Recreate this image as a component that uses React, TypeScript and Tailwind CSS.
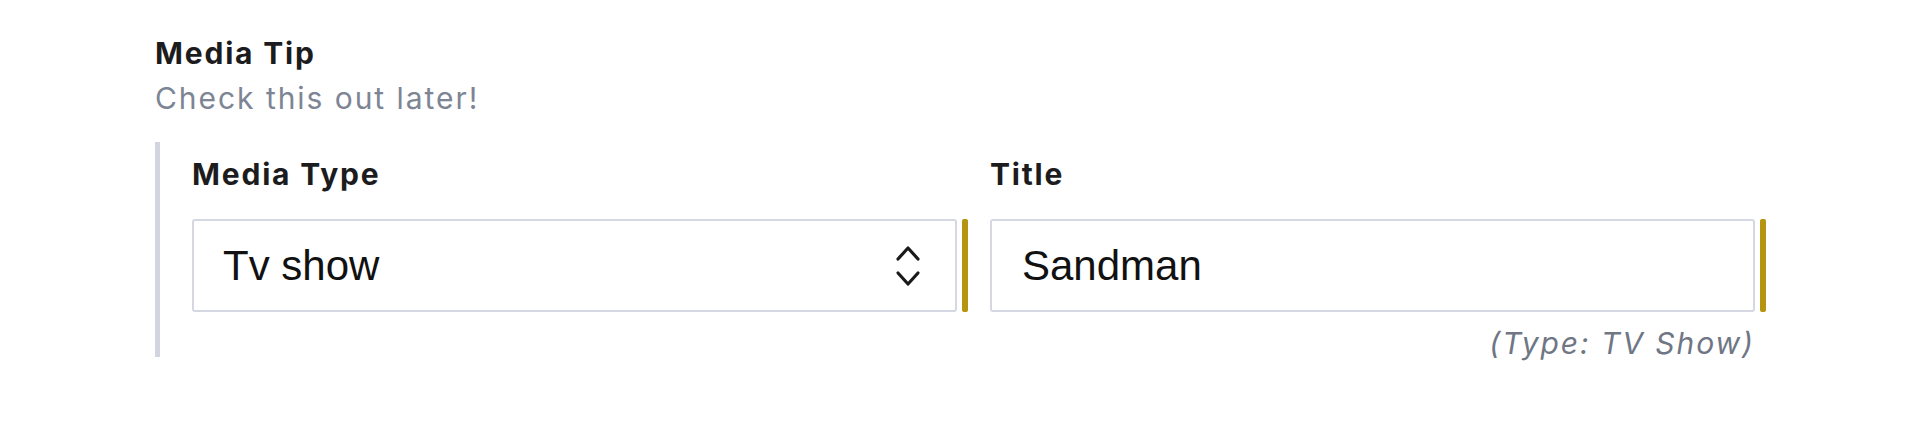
import { useState } from "react";

function Chevrons() {
  return (
    <svg width="26" height="44" viewBox="0 0 26 44" fill="none" className="shrink-0">
      <path d="M3 15 L13 4 L23 15" stroke="#1a1a1a" strokeWidth="3.2" strokeLinecap="round" strokeLinejoin="round" />
      <path d="M3 29 L13 40 L23 29" stroke="#1a1a1a" strokeWidth="3.2" strokeLinecap="round" strokeLinejoin="round" />
    </svg>
  );
}

interface FieldProps {
  label: string;
  children: React.ReactNode;
}

function Field({ label, children }: FieldProps) {
  return (
    <div className="flex flex-col">
      <label className="font-['Inter'] font-bold text-[30px] leading-[36px] tracking-[0.06em] text-[#1c1c1e]">
        {label}
      </label>
      <div className="mt-[27px] flex items-stretch gap-[5px]">
        {children}
        <div className="w-[6px] shrink-0 rounded-[2px] bg-[#b5950f]" />
      </div>
    </div>
  );
}

export default function App() {
  const [mediaType, setMediaType] = useState("tv");
  const [title, setTitle] = useState("Sandman");

  return (
    <div className="h-[426px] w-[1920px] bg-white pl-[155px] pt-[35px]">
      <div className="w-[1611px]">
        <h2 className="font-['Inter'] font-bold text-[30px] leading-[36px] tracking-[0.06em] text-[#1c1c1e]">
          Media Tip
        </h2>
        <p className="mt-[9px] font-['Inter'] text-[30px] leading-[36px] tracking-[0.065em] text-[#7d8594]">
          Check this out later!
        </p>

        <div className="mt-[26px] border-l-[5px] border-[#d2d5de] pl-[32px] pt-[14px]">
          <div className="grid grid-cols-2 gap-x-[22px]">
            <Field label="Media Type">
              <div className="relative flex h-[93px] flex-1 items-center rounded-[3px] border-2 border-[#d5d8e2] bg-white pl-[29px] pr-[34px]">
                <select
                  value={mediaType}
                  onChange={(e) => setMediaType(e.target.value)}
                  className="h-full flex-1 appearance-none bg-transparent font-['Liberation_Sans',Arial,sans-serif] text-[42px] text-[#111] outline-none"
                >
                  <option value="tv">Tv show</option>
                  <option value="movie">Movie</option>
                  <option value="book">Book</option>
                </select>
                <Chevrons />
              </div>
            </Field>
            <Field label="Title">
              <div className="flex h-[93px] flex-1 items-center rounded-[3px] border-2 border-[#d5d8e2] bg-white pl-[30px] pr-[20px]">
                <input
                  value={title}
                  onChange={(e) => setTitle(e.target.value)}
                  className="h-full w-full bg-transparent font-['Liberation_Sans',Arial,sans-serif] text-[42px] text-[#111] outline-none"
                />
              </div>
            </Field>
          </div>
          <div className="mt-[17px] flex justify-end pr-[11px]">
            <span className="font-['Inter'] italic text-[30px] leading-[28px] tracking-[0.065em] text-[#6f7684]">
              (Type: TV Show)
            </span>
          </div>
        </div>
      </div>
    </div>
  );
}
